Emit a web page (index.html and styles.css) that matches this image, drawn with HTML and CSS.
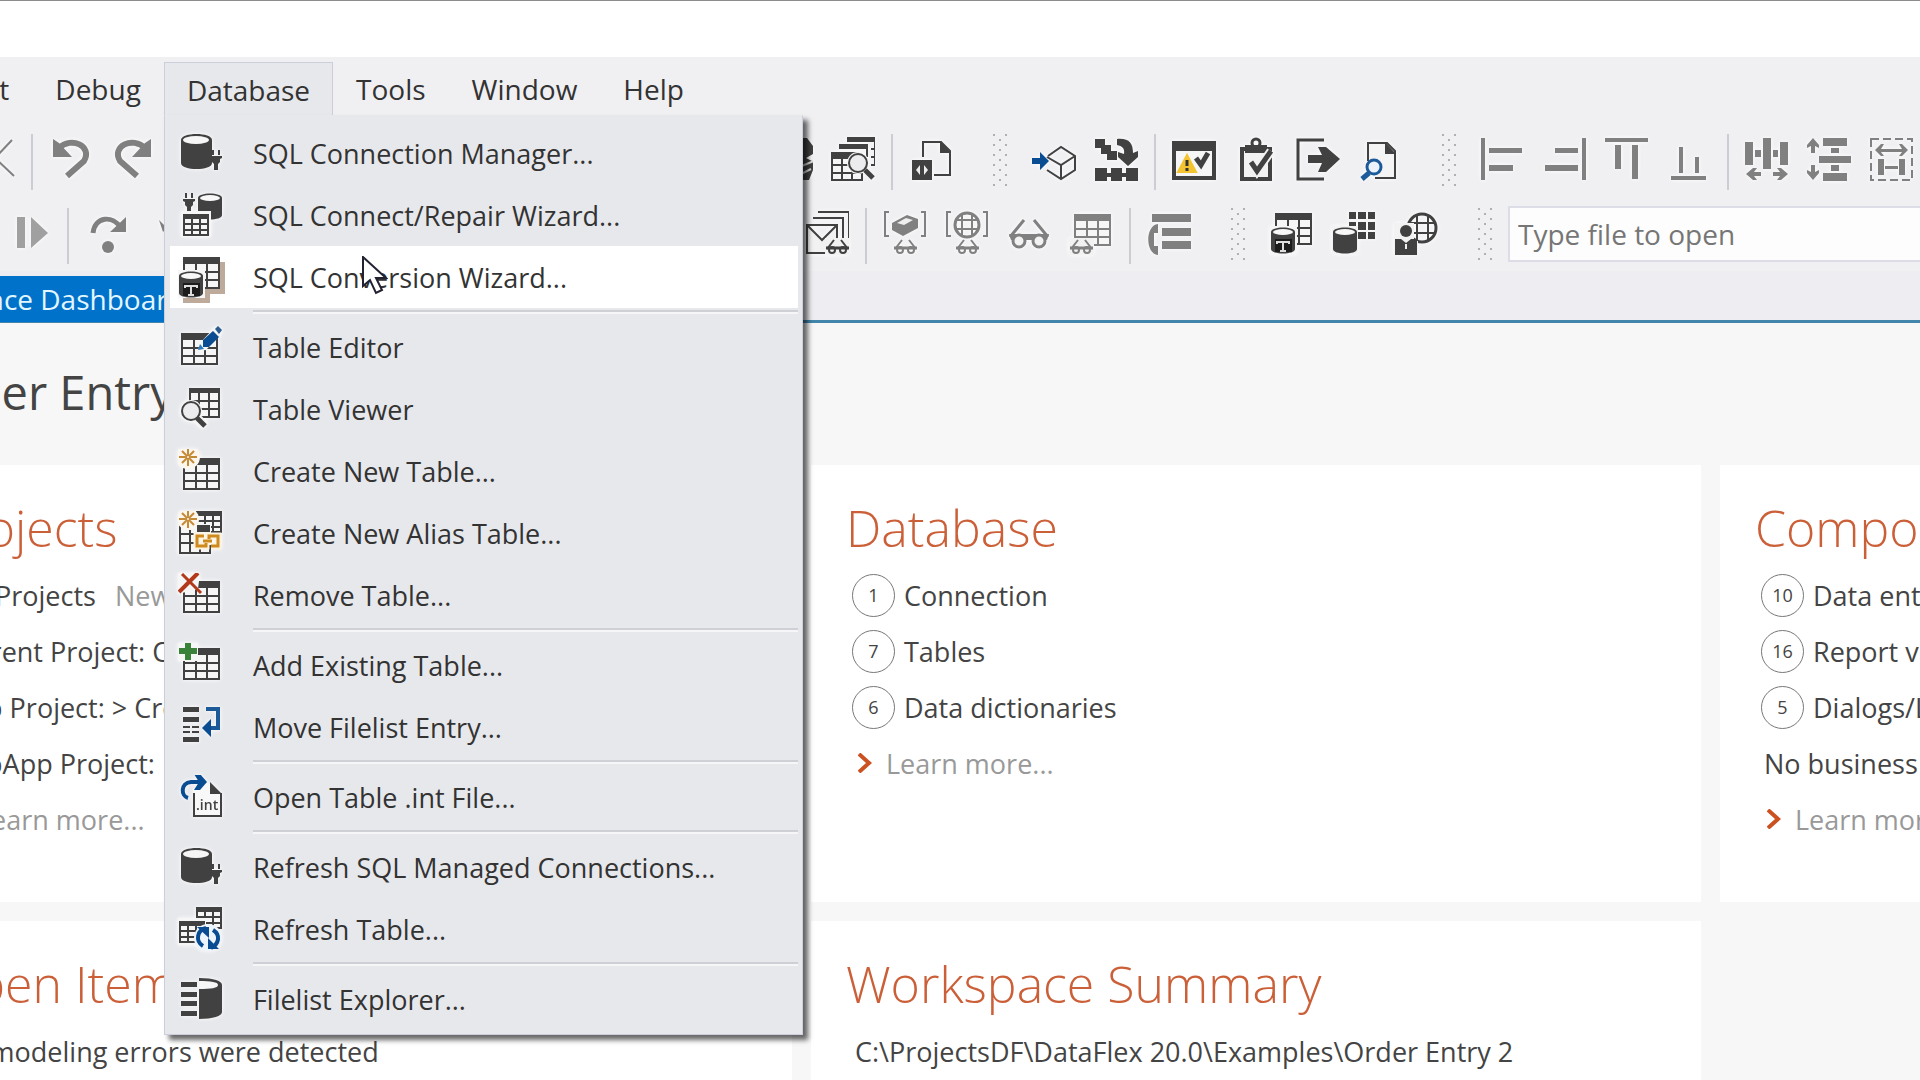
FILE: index.html
```html
<!DOCTYPE html>
<html lang="en">
<head>
    <meta charset="UTF-8">
    <meta name="viewport" content="width=device-width, initial-scale=1.0">
    <title>Order Entry 2 - Workspace Dashboard</title>
    <link rel="stylesheet" href="styles.css">
</head>
<body>

<!-- Icon set, all drawn on a 44x44 grid -->
<svg class="icon-defs" aria-hidden="true">
    <defs>
        <pattern id="grip-dots" width="12" height="10" patternUnits="userSpaceOnUse">
            <path d="M0 0h2v2H0zM6 5h2v2H6z" fill="#b0b0b4"/>
        </pattern>
        <g id="grid">
            <path d="M1 1h35v30H1z" fill="#f6f6f6" stroke="currentColor" stroke-width="2"/>
            <path d="M0 0h37v7H0z" fill="currentColor"/>
            <path d="M1 15h35M1 23h35M13 7v24M24 7v24" fill="none" stroke="currentColor" stroke-width="2"/>
        </g>
        <g id="small-grid">
            <path d="M1 1h24v20H1z" fill="#f6f6f6" stroke="currentColor" stroke-width="2"/>
            <path d="M0 0h26v5H0z" fill="currentColor"/>
            <path d="M1 10h24M1 16h24M9 5v16M17 5v16" fill="none" stroke="currentColor" stroke-width="2"/>
        </g>
        <g id="drum">
            <path d="M0 5C0-1 24-1 24 5v17c0 6-24 6-24 0z" fill="currentColor"/>
            <ellipse cx="12" cy="5" rx="10" ry="3" fill="#f8f8f8"/>
        </g>
        <g id="plug" fill="currentColor">
            <path d="M2 0h2v5H2zM8 0h2v5H8zM0 6h12v2l-2 1v3l-2 2v6H4v-6l-2-2V9L0 8z"/>
        </g>
        <g id="glasses" fill="none" stroke="currentColor">
            <path d="M1 10L8 1M22 10L15 1" stroke-width="2"/>
            <path d="M0 9h23" stroke-width="3"/>
            <circle cx="6" cy="11" r="3" stroke-width="2"/>
            <circle cx="17" cy="11" r="3" stroke-width="2"/>
        </g>
        <g id="spark" fill="none" stroke="#c58a35" stroke-width="2">
            <path d="M9 0v6M9 12v6M0 9h6M12 9h6M3 3l4 4M11 11l4 4M3 15l4-4M11 7l4-4"/>
            <circle cx="9" cy="9" r="2"/>
        </g>
    </defs>

    <symbol id="i-sql-manager" viewBox="0 0 44 44">
        <path d="M3 9C3 1 34 1 34 9v23c0 8-31 8-31 0z" fill="currentColor"/>
        <ellipse cx="18" cy="9" rx="13" ry="4" fill="#f6f6f6"/>
        <use href="#plug" x="32" y="19"/>
    </symbol>
    <symbol id="i-sql-repair" viewBox="0 0 44 44">
        <use href="#plug" x="5"/>
        <use href="#drum" x="20"/>
        <path d="M3 18h30v26H3z" fill="#f6f6f6"/>
        <use href="#small-grid" x="5" y="21"/>
    </symbol>
    <symbol id="i-sql-convert" viewBox="0 0 44 44">
        <use href="#grid" x="5" y="2"/>
        <path d="M0 15h27v28H0z" fill="#f6f6f6"/>
        <use href="#drum" x="1" y="16"/>
        <path d="M5 28h17v13H5z" fill="#1c1c1c"/>
        <path d="M7 33v-2h12v2M13 31v9M10 40h6" fill="none" stroke="#ddd" stroke-width="2"/>
    </symbol>
    <symbol id="i-table-edit" viewBox="0 0 44 44">
        <use href="#grid" x="3" y="8"/>
        <path d="M20 26l2-8L37 2l7 6-16 17z" fill="#f6f6f6"/>
        <path d="M25 15l10-9 6 6-10 10h-6z" fill="#0a4c92"/>
        <path d="M37 4l3-3 4 4-3 4z" fill="#2a5c90"/>
        <path d="M20 25l2-6 4 5z" fill="#2a7ac0"/>
    </symbol>
    <symbol id="i-table-view" viewBox="0 0 44 44">
        <path d="M12 2h29v28H12z" fill="#f6f6f6" stroke="currentColor" stroke-width="2"/>
        <path d="M11 1h31v5H11z" fill="currentColor"/>
        <path d="M12 14h29M12 22h29M21 6v24M31 6v24" fill="none" stroke="currentColor" stroke-width="2"/>
        <path d="M19 31l8 8" stroke="#f6f6f6" stroke-width="9"/>
        <circle cx="13" cy="24" r="11" fill="#f6f6f6"/>
        <circle cx="13" cy="24" r="9" fill="#ececef" stroke="currentColor" stroke-width="2"/>
        <path d="M19 31l8 8" stroke="currentColor" stroke-width="5"/>
    </symbol>
    <symbol id="i-table-new" viewBox="0 0 44 44">
        <use href="#grid" x="5" y="9"/>
        <circle cx="10" cy="8" r="12" fill="#fbf6ee"/>
        <use href="#spark" x="1" y="-1"/>
    </symbol>
    <symbol id="i-table-alias" viewBox="0 0 44 44">
        <use href="#small-grid" x="18" y="0"/>
        <path d="M-1 13h34v30H-1z" fill="#f6f6f6"/>
        <path d="M2 14v28h30v-8M2 23h14M2 32h14M12 19v23M22 34v8" fill="none" stroke="currentColor" stroke-width="2"/>
        <path d="M19 14h13v7H19z" fill="currentColor"/>
        <circle cx="10" cy="8" r="11" fill="#fbf6ee"/>
        <use href="#spark" x="1" y="-1"/>
        <path d="M26 25h-7v10h9v-3M33 35h7V25h-9v3M25 30h9" fill="none" stroke="#fdf3df" stroke-width="7"/>
        <path d="M26 25h-7v10h9v-3M33 35h7V25h-9v3M25 30h9" fill="none" stroke="#cf8a1e" stroke-width="3"/>
    </symbol>
    <symbol id="i-table-remove" viewBox="0 0 44 44">
        <use href="#grid" x="5" y="8"/>
        <path d="M0 0h22l-2 16-20 5z" fill="#f6f6f6"/>
        <path d="M1 19L20 0" stroke="#b3391b" stroke-width="4"/>
        <path d="M4 1l19 19" stroke="#b3391b" stroke-width="3"/>
    </symbol>
    <symbol id="i-table-add" viewBox="0 0 44 44">
        <use href="#grid" x="5" y="5"/>
        <path d="M0 0h20v18H0z" fill="#f6f6f6"/>
        <path d="M10 0v17M1 8h18" stroke="#3a8239" stroke-width="6"/>
    </symbol>
    <symbol id="i-move" viewBox="0 0 44 44">
        <path d="M5 2h16v5H5zM5 12h16v5H5zM5 21h7v2H5zM14 21h7v2h-7zM5 26h7v2H5zM14 26h7v2h-7zM5 32h16v5H5z" fill="currentColor"/>
        <path d="M28 4h12v19h-9" fill="none" stroke="#1c5a9a" stroke-width="4"/>
        <path d="M24 23l9-9v18z" fill="#0a4c92"/>
    </symbol>
    <symbol id="i-open-int" viewBox="0 0 44 44">
        <path d="M15 14v27h28V18L33 8" fill="#f8f8f8"/>
        <path d="M16 18v23h27V18" fill="none" stroke="currentColor" stroke-width="2"/>
        <path d="M32 7l12 12H32z" fill="currentColor"/>
        <path d="M10 23c-7-2-8-15 3-16h11" fill="none" stroke="#0a4c92" stroke-width="4"/>
        <path d="M16-1h6l7 8-7 8h-6l5-8z" fill="#0a4c92"/>
        <text x="18" y="35" font-size="14" font-weight="600" fill="currentColor">.int</text>
    </symbol>
    <symbol id="i-refresh" viewBox="0 0 44 44">
        <use href="#small-grid" x="18" y="0"/>
        <path d="M-1 11h29v27H-1z" fill="#f6f6f6"/>
        <use href="#small-grid" x="1" y="14"/>
        <circle cx="30" cy="31" r="14" fill="#edf4fb"/>
        <path d="M25 39c-8-5-6-16 3-18M35 23c8 5 6 14-2 18" fill="none" stroke="#0a4c92" stroke-width="4"/>
        <path d="M19 20h12v11zM41 42H30V31z" fill="#0a4c92"/>
    </symbol>
    <symbol id="i-filelist" viewBox="0 0 44 44">
        <path d="M3 5h16v5H3zM3 15h16v5H3zM3 24h16v5H3zM3 34h16v5H3z" fill="currentColor"/>
        <path d="M21 1c15 0 23 3 23 7v27c0 4-9 7-23 7z" fill="currentColor"/>
        <path d="M21 4c12 0 19 1 19 4s-7 4-19 4z" fill="#f6f6f6"/>
    </symbol>

    <symbol id="i-cut" viewBox="0 0 44 44">
        <path d="M41 3L24 21l19 18" fill="none" stroke="currentColor" stroke-width="2"/>
    </symbol>
    <symbol id="i-undo" viewBox="0 0 44 44">
        <path d="M10 11C22-1 44 9 35 24L18 39" fill="none" stroke="currentColor" stroke-width="6"/>
        <path d="M4 2l6 4 13 14H4z" fill="currentColor"/>
    </symbol>
    <symbol id="i-redo" viewBox="0 0 44 44">
        <path d="M34 11C22-1 0 9 9 24l17 15" fill="none" stroke="currentColor" stroke-width="6"/>
        <path d="M40 2l-6 4-13 14h19z" fill="currentColor"/>
    </symbol>
    <symbol id="i-step" viewBox="0 0 44 44">
        <path d="M10 6h8v31h-8zM24 6l17 16-17 15z" fill="currentColor"/>
    </symbol>
    <symbol id="i-step-over" viewBox="0 0 44 44">
        <path d="M8 22C10 5 28 4 36 17" fill="none" stroke="currentColor" stroke-width="5"/>
        <path d="M41 6v15H25z" fill="currentColor"/>
        <circle cx="23" cy="36" r="6" fill="currentColor"/>
    </symbol>
    <symbol id="i-step-in" viewBox="0 0 44 44">
        <path d="M12 9l8 8-4 4z" fill="currentColor"/>
    </symbol>
    <symbol id="i-find" viewBox="0 0 44 44">
        <path d="M26 1h12l6 8v8l-7 4 8 4-1 8-4 10H22z" fill="currentColor"/>
        <path d="M28 31l17-7M28 39l14-7" stroke="#ddd" stroke-width="2"/>
    </symbol>
    <symbol id="i-table-search" viewBox="0 0 44 44">
        <path d="M16 0h28v28h-4M40 12h4M40 20h4" fill="none" stroke="currentColor" stroke-width="2"/>
        <path d="M16 0h28v5H16zM8 7h29v5H8z" fill="currentColor"/>
        <path d="M36 8v12" stroke="currentColor" stroke-width="2"/>
        <path d="M0 15h28v7H0z" fill="currentColor"/>
        <path d="M1 16v27h30V30M1 28h20M1 36h30M11 22v21M21 33v10" fill="none" stroke="currentColor" stroke-width="2"/>
        <circle cx="27" cy="26" r="11" fill="#f6f6f6"/>
        <circle cx="27" cy="26" r="9" fill="#ececef" stroke="currentColor" stroke-width="2"/>
        <path d="M34 33l8 8" stroke="currentColor" stroke-width="5"/>
    </symbol>
    <symbol id="i-doc-code" viewBox="0 0 44 44">
        <path d="M14 20V5h18l9 9v24H25" fill="none" stroke="currentColor" stroke-width="2"/>
        <path d="M31 4l11 12H31zM3 23h20v20H3z" fill="currentColor"/>
        <path d="M11 28v10l-4-5zM15 28v10l4-5z" fill="#eee"/>
    </symbol>
    <symbol id="i-box-in" viewBox="0 0 44 44">
        <path d="M16 19l13-9 14 9v14l-14 9-14-9M15 20l14 8 14-9M29 28v13" fill="none" stroke="currentColor" stroke-width="2"/>
        <path d="M0 21h8v-6l9 9-9 9v-6H0z" fill="#0a4c92"/>
    </symbol>
    <symbol id="i-build" viewBox="0 0 44 44">
        <path d="M1 2h10v6h6v6h6v9H13v-6H7v-6H1zM1 31h12v5h4v-5h11v5h4v-5h12v14H32v-5h-4v5H17v-5h-4v5H1z" fill="currentColor"/>
        <path d="M23 2c12-1 16 4 16 14l5-2v6L34 29 24 20v-5l6 2c1-6-2-8-7-9z" fill="currentColor"/>
    </symbol>
    <symbol id="i-window-warn" viewBox="0 0 44 44">
        <path d="M2 8h40v33H2z" fill="#f6f6f6" stroke="currentColor" stroke-width="4"/>
        <path d="M0 4h44v10H0z" fill="currentColor"/>
        <path d="M15 18L6 35h18z" fill="#f4c430" stroke="#f4c430" stroke-width="2"/>
        <path d="M15 23v6M15 31v3" stroke="#333" stroke-width="3"/>
        <path d="M24 21l5 7 7-12" fill="none" stroke="currentColor" stroke-width="5"/>
    </symbol>
    <symbol id="i-clipboard" viewBox="0 0 44 44">
        <path d="M8 12h28v30H8z" fill="#f2f2f2" stroke="currentColor" stroke-width="4"/>
        <path d="M11 8h22v8H11z" fill="currentColor"/>
        <circle cx="22" cy="6" r="4" fill="none" stroke="currentColor" stroke-width="3"/>
        <path d="M17 25l6 9 14-20" fill="none" stroke="#f2f2f2" stroke-width="9"/>
        <path d="M17 25l6 9 14-20" fill="none" stroke="currentColor" stroke-width="5"/>
    </symbol>
    <symbol id="i-exit" viewBox="0 0 44 44">
        <path d="M28 3H2v39h26" fill="none" stroke="currentColor" stroke-width="3"/>
        <path d="M12 18h14l-4-8h8l14 12-14 13h-8l4-9H12z" fill="currentColor"/>
    </symbol>
    <symbol id="i-doc-search" viewBox="0 0 44 44">
        <path d="M10 24V6h19l8 8v27H17" fill="#f4f4f4" stroke="currentColor" stroke-width="2"/>
        <path d="M27 5l11 12H27z" fill="currentColor"/>
        <circle cx="16" cy="30" r="7" fill="#eaf3fb" stroke="#1c5a9a" stroke-width="3"/>
        <path d="M11 36l-7 6" stroke="#1c5a9a" stroke-width="5"/>
    </symbol>
    <symbol id="i-align-left" viewBox="0 0 44 44">
        <path d="M0 1h4v42H0zM8 11h33v5H8zM8 28h24v6H8z" fill="currentColor"/>
    </symbol>
    <symbol id="i-align-right" viewBox="0 0 44 44">
        <path d="M39 1h4v42h-4zM12 11h23v5H12zM2 28h33v6H2z" fill="currentColor"/>
    </symbol>
    <symbol id="i-align-top" viewBox="0 0 44 44">
        <path d="M0 1h43v4H0zM10 8h6v24h-6zM27 8h6v34h-6z" fill="currentColor"/>
    </symbol>
    <symbol id="i-align-bottom" viewBox="0 0 44 44">
        <path d="M4 39h35v4H4zM12 10h4v26h-4zM28 20h4v16h-4z" fill="currentColor"/>
    </symbol>
    <symbol id="i-space-h" viewBox="0 0 44 44">
        <path d="M0 5h8v23H0zM10 13h6v7h-6zM18 1h8v31h-8zM28 13h5v7h-5zM35 5h8v23h-8zM1 37l7-6h4l-3 4h7v4H9l3 4H8zM43 37l-7-6h-4l3 4h-7v4h7l-3 4h4z" fill="currentColor"/>
    </symbol>
    <symbol id="i-space-v" viewBox="0 0 44 44">
        <path d="M16 1h24v8H16zM24 11h8v5h-8zM12 19h32v7H12zM24 28h8v6h-8zM16 36h24v8H16zM6 1l6 7v3L8 9v7H4V9l-4 2V8zM6 43l6-7v-3l-4 2v-7H4v7l-4-2v3z" fill="currentColor"/>
    </symbol>
    <symbol id="i-size-to" viewBox="0 0 44 44">
        <path d="M2 2h41v41H2z" fill="none" stroke="currentColor" stroke-width="2" stroke-dasharray="8 4"/>
        <path d="M6 13l6-6h3l-3 5h21l-3-5h3l6 6-6 6h-3l3-4H12l3 4h-3zM9 22h6v16H9zM30 22h6v16h-6zM16 29h13v3H16z" fill="currentColor"/>
    </symbol>

    <symbol id="i-mail" viewBox="0 0 44 44">
        <path d="M13 1h31v28M8 7h30v20" fill="none" stroke="currentColor" stroke-width="2"/>
        <path d="M2 14h30v28H2zM2 14l15 15 15-15" fill="#f2f2f2" stroke="currentColor" stroke-width="2"/>
        <path d="M20 27h24v17H20z" fill="#f2f2f2"/>
        <use href="#glasses" x="21" y="28"/>
    </symbol>
    <symbol id="i-watch-local" viewBox="0 0 44 44">
        <path d="M6 1H2v24h4M38 1h4v24h-4" fill="none" stroke="currentColor" stroke-width="2"/>
        <path d="M9 12l15-8 11 4v9L20 25 9 19z" fill="currentColor"/>
        <path d="M14 12l9-5 7 2-9 5z" fill="#eee"/>
        <use href="#glasses" x="11" y="28"/>
    </symbol>
    <symbol id="i-watch-global" viewBox="0 0 44 44">
        <path d="M6 1H2v24h4M38 1h4v24h-4" fill="none" stroke="currentColor" stroke-width="2"/>
        <circle cx="22" cy="14" r="12" fill="none" stroke="currentColor" stroke-width="3"/>
        <path d="M11 9h22M11 18h22M17 3v22M27 3v22" stroke="currentColor" stroke-width="2"/>
        <use href="#glasses" x="11" y="28"/>
    </symbol>
    <symbol id="i-watch" viewBox="0 0 44 44">
        <path d="M3 26L17 9M41 26L27 9" stroke="currentColor" stroke-width="3"/>
        <path d="M2 23h40l-2 6H4z" fill="currentColor"/>
        <circle cx="12" cy="30" r="6" fill="#f2f2f2" stroke="currentColor" stroke-width="3"/>
        <circle cx="32" cy="30" r="6" fill="#f2f2f2" stroke="currentColor" stroke-width="3"/>
    </symbol>
    <symbol id="i-watch-table" viewBox="0 0 44 44">
        <use href="#grid" x="5" y="3"/>
        <path d="M0 27h25v17H0z" fill="#f2f2f2"/>
        <use href="#glasses" x="1" y="28"/>
    </symbol>
    <symbol id="i-call-stack" viewBox="0 0 44 44">
        <path d="M5 3h39v8H5zM15 17h29v8H15zM15 30h29v8H15zM11 13v9H7v13h4v9C-2 43-2 14 11 13z" fill="currentColor"/>
    </symbol>
    <symbol id="i-db-grid" viewBox="0 0 44 44">
        <path d="M17 1h7v7h-7zM26 1h8v7h-8zM36 1h7v7h-7zM17 11h7v8h-7zM26 11h8v8h-8zM36 11h7v8h-7zM26 21h8v7h-8zM36 21h7v7h-7z" fill="currentColor"/>
        <path d="M0 15h26v28H0z" fill="#f2f2f2"/>
        <use href="#drum" x="1" y="16"/>
    </symbol>
    <symbol id="i-user-web" viewBox="0 0 44 44">
        <circle cx="28" cy="17" r="14" fill="none" stroke="currentColor" stroke-width="3"/>
        <path d="M16 12h25M16 22h25M23 4v26M34 4v26" stroke="currentColor" stroke-width="2"/>
        <path d="M0 12h20v18h4v14H0z" fill="#f2f2f2"/>
        <circle cx="12" cy="20" r="6" fill="currentColor"/>
        <path d="M1 28h6l5 4 5-4h6v16H1z" fill="currentColor"/>
        <path d="M12 33v5" stroke="#eee" stroke-width="2"/>
    </symbol>
    <symbol id="i-chevron" viewBox="0 0 14 20">
        <path d="M1 1l10 9L1 19" fill="none" stroke="currentColor" stroke-width="4"/>
    </symbol>
    <symbol id="i-grip" viewBox="0 0 16 52">
        <rect width="14" height="52" fill="url(#grip-dots)"/>
    </symbol>
</svg>

<div class="window">
    <div class="title-bar"></div>

    <nav class="menu-bar">
        <button class="menu-title">Project</button>
        <button class="menu-title">Debug</button>
        <div class="menu-open">
            <button class="menu-title active" aria-expanded="true">Database</button>
            <div class="menu">
                <button class="menu-item"><svg class="icon"><use href="#i-sql-manager"/></svg>SQL Connection Manager...</button>
                <button class="menu-item"><svg class="icon"><use href="#i-sql-repair"/></svg>SQL Connect/Repair Wizard...</button>
                <button class="menu-item selected"><svg class="icon"><use href="#i-sql-convert"/></svg>SQL Conversion Wizard...</button>
                <hr>
                <button class="menu-item"><svg class="icon"><use href="#i-table-edit"/></svg>Table Editor</button>
                <button class="menu-item"><svg class="icon"><use href="#i-table-view"/></svg>Table Viewer</button>
                <button class="menu-item"><svg class="icon"><use href="#i-table-new"/></svg>Create New Table...</button>
                <button class="menu-item"><svg class="icon"><use href="#i-table-alias"/></svg>Create New Alias Table...</button>
                <button class="menu-item"><svg class="icon"><use href="#i-table-remove"/></svg>Remove Table...</button>
                <hr>
                <button class="menu-item"><svg class="icon"><use href="#i-table-add"/></svg>Add Existing Table...</button>
                <button class="menu-item"><svg class="icon"><use href="#i-move"/></svg>Move Filelist Entry...</button>
                <hr>
                <button class="menu-item"><svg class="icon"><use href="#i-open-int"/></svg>Open Table .int File...</button>
                <hr>
                <button class="menu-item"><svg class="icon"><use href="#i-sql-manager"/></svg>Refresh SQL Managed Connections...</button>
                <button class="menu-item"><svg class="icon"><use href="#i-refresh"/></svg>Refresh Table...</button>
                <hr>
                <button class="menu-item"><svg class="icon"><use href="#i-filelist"/></svg>Filelist Explorer...</button>
                <svg class="cursor" viewBox="0 0 26 40"><path d="M1 1v29l7-6 6 13 6-3-6-12h10z" fill="#fff" stroke="#223" stroke-width="2"/></svg>
            </div>
        </div>
        <button class="menu-title">Tools</button>
        <button class="menu-title">Window</button>
        <button class="menu-title">Help</button>
    </nav>

    <div class="toolbars">
        <div class="toolbar toolbar-edit">
            <button class="tool disabled" aria-label="Cut"><svg class="icon"><use href="#i-cut"/></svg></button>
            <span class="separator"></span>
            <button class="tool disabled" aria-label="Undo"><svg class="icon"><use href="#i-undo"/></svg></button>
            <button class="tool disabled" aria-label="Redo"><svg class="icon"><use href="#i-redo"/></svg></button>
            <span class="toolbar-space"></span>
            <button class="tool" aria-label="Find"><svg class="icon"><use href="#i-find"/></svg></button>
            <button class="tool" aria-label="Find in tables"><svg class="icon"><use href="#i-table-search"/></svg></button>
            <span class="separator"></span>
            <button class="tool" aria-label="Source"><svg class="icon"><use href="#i-doc-code"/></svg></button>
            <svg class="grip"><use href="#i-grip"/></svg>
            <button class="tool" aria-label="Add package"><svg class="icon"><use href="#i-box-in"/></svg></button>
            <button class="tool" aria-label="Build"><svg class="icon"><use href="#i-build"/></svg></button>
            <span class="separator"></span>
            <button class="tool" aria-label="Errors and warnings"><svg class="icon"><use href="#i-window-warn"/></svg></button>
            <button class="tool" aria-label="Tasks"><svg class="icon"><use href="#i-clipboard"/></svg></button>
            <button class="tool" aria-label="Output"><svg class="icon"><use href="#i-exit"/></svg></button>
            <button class="tool" aria-label="Find in file"><svg class="icon"><use href="#i-doc-search"/></svg></button>
            <svg class="grip"><use href="#i-grip"/></svg>
            <button class="tool disabled" aria-label="Align left"><svg class="icon"><use href="#i-align-left"/></svg></button>
            <button class="tool disabled" aria-label="Align right"><svg class="icon"><use href="#i-align-right"/></svg></button>
            <button class="tool disabled" aria-label="Align top"><svg class="icon"><use href="#i-align-top"/></svg></button>
            <button class="tool disabled" aria-label="Align bottom"><svg class="icon"><use href="#i-align-bottom"/></svg></button>
            <span class="separator"></span>
            <button class="tool disabled" aria-label="Space across"><svg class="icon"><use href="#i-space-h"/></svg></button>
            <button class="tool disabled" aria-label="Space down"><svg class="icon"><use href="#i-space-v"/></svg></button>
            <button class="tool disabled" aria-label="Size to content"><svg class="icon"><use href="#i-size-to"/></svg></button>
        </div>
        <div class="toolbar toolbar-debug">
            <button class="tool faded" aria-label="Continue"><svg class="icon"><use href="#i-step"/></svg></button>
            <span class="separator"></span>
            <button class="tool disabled" aria-label="Step over"><svg class="icon"><use href="#i-step-over"/></svg></button>
            <button class="tool disabled" aria-label="Step into"><svg class="icon"><use href="#i-step-in"/></svg></button>
            <span class="toolbar-space"></span>
            <button class="tool" aria-label="Message watch"><svg class="icon"><use href="#i-mail"/></svg></button>
            <span class="separator"></span>
            <button class="tool disabled" aria-label="Local watch"><svg class="icon"><use href="#i-watch-local"/></svg></button>
            <button class="tool disabled" aria-label="Global watch"><svg class="icon"><use href="#i-watch-global"/></svg></button>
            <button class="tool disabled" aria-label="Watch"><svg class="icon"><use href="#i-watch"/></svg></button>
            <button class="tool disabled" aria-label="Table watch"><svg class="icon"><use href="#i-watch-table"/></svg></button>
            <span class="separator"></span>
            <button class="tool disabled" aria-label="Call stack"><svg class="icon"><use href="#i-call-stack"/></svg></button>
            <svg class="grip"><use href="#i-grip"/></svg>
            <button class="tool" aria-label="Convert"><svg class="icon"><use href="#i-sql-convert"/></svg></button>
            <button class="tool" aria-label="Database builder"><svg class="icon"><use href="#i-db-grid"/></svg></button>
            <button class="tool" aria-label="Web users"><svg class="icon"><use href="#i-user-web"/></svg></button>
            <svg class="grip"><use href="#i-grip"/></svg>
            <input class="file-search" type="text" placeholder="Type file to open" aria-label="Type file to open">
        </div>
    </div>

    <div class="tab-strip">
        <button class="tab">Workspace Dashboard</button>
    </div>

    <main class="dashboard">
        <h1>Order Entry 2</h1>
        <div class="cards">
            <section class="card">
                <h2>Projects</h2>
                <div class="row"><span class="count">4</span>Projects <a class="action" href="#">New</a></div>
                <div class="row text-row">Current Project: Order</div>
                <div class="row text-row">Web Project: &gt; Create</div>
                <div class="row text-row">WebApp Project:</div>
                <a class="row learn" href="#"><svg class="chevron"><use href="#i-chevron"/></svg>Learn more...</a>
            </section>
            <section class="card">
                <h2>Database</h2>
                <div class="row"><span class="count">1</span>Connection</div>
                <div class="row"><span class="count">7</span>Tables</div>
                <div class="row"><span class="count">6</span>Data dictionaries</div>
                <a class="row learn" href="#"><svg class="chevron"><use href="#i-chevron"/></svg>Learn more...</a>
            </section>
            <section class="card">
                <h2>Components</h2>
                <div class="row"><span class="count">10</span>Data entry views</div>
                <div class="row"><span class="count">16</span>Report views</div>
                <div class="row"><span class="count">5</span>Dialogs/Lookups</div>
                <div class="row text-row">No business processes</div>
                <a class="row learn" href="#"><svg class="chevron"><use href="#i-chevron"/></svg>Learn more...</a>
            </section>
            <section class="card">
                <h2>Open Items</h2>
                <div class="row text-row">No modeling errors were detected</div>
            </section>
            <section class="card">
                <h2>Workspace Summary</h2>
                <div class="row text-row">C:\ProjectsDF\DataFlex 20.0\Examples\Order Entry 2</div>
            </section>
        </div>
    </main>
</div>

</body>
</html>
```

FILE: styles.css
```css
* {
    box-sizing: border-box;
    margin: 0;
    padding: 0;
}

html, body {
    height: 100%;
    overflow: hidden;
}

body {
    font-family: "Open Sans", "Noto Sans", sans-serif;
    font-size: 28px;
    color: #444;
    background-color: #f7f7f7;
}

button, input {
    font: inherit;
    color: inherit;
    border: none;
    background: none;
}

.icon-defs {
    position: absolute;
    width: 0;
    height: 0;
}

.window {
    display: flex;
    flex-direction: column;
    height: 100%;
}

.title-bar {
    flex: none;
    height: 57px;
    background-color: #fff;
    border-top: 1px solid #8c8c8c;
}

/* menu bar */

.menu-bar {
    display: flex;
    align-items: flex-end;
    flex: none;
    height: 60px;
    padding-bottom: 1px;
    margin-left: -105px;
    background-color: #f0f0f3;
    color: #333;
}

.menu-title {
    height: 54px;
    padding: 0 23px;
    white-space: nowrap;
}

.menu-open {
    position: relative;
}

.menu-title.active {
    padding: 0 22px;
    background-color: #e7e8ec;
    border: 1px solid #cccedb;
    border-bottom: none;
}

.menu {
    position: absolute;
    z-index: 1;
    top: 53px;
    left: 0;
    width: 639px;
    padding: 6px 4px 4px 5px;
    background-color: #e7e8ec;
    border: 1px solid #cccedb;
    border-top-color: #e7e8ec;
    box-shadow: 5px 5px 5px rgba(0, 0, 0, 0.6);
    font-size: 27px;
}

.menu-item {
    display: flex;
    align-items: center;
    gap: 31px;
    width: 100%;
    height: 62px;
    padding-left: 8px;
    text-align: left;
    white-space: nowrap;
}

.menu-item.selected {
    background-color: #fff;
}

.menu-item.selected .icon {
    filter: drop-shadow(5px 5px 0 #bdaa9b);
}

.menu hr {
    height: 4px;
    margin: 2px 0 2px 83px;
    border: none;
    border-top: 2px solid #cfd0d6;
    background-color: #f6f6f8;
}

.cursor {
    position: absolute;
    top: 140px;
    left: 197px;
    width: 26px;
    height: 40px;
}

.icon {
    flex: none;
    width: 44px;
    height: 44px;
    overflow: visible;
    color: #414141;
    filter: drop-shadow(0 0 2px #fff);
}

/* toolbars */

.toolbars {
    flex: none;
    padding-top: 6px;
    background-color: #f0f0f3;
    overflow: hidden;
}

.toolbar {
    display: flex;
    align-items: center;
    height: 74px;
}

.toolbar-edit {
    margin-left: -38px;
}

.toolbar-debug {
    margin-left: -2px;
}

.toolbar-space {
    flex: none;
    width: 596px;
}

.tool {
    display: flex;
    flex: none;
    padding: 0 9px 2px;
}

.tool.disabled .icon {
    color: #808080;
}

.tool.faded .icon {
    color: #a0a0a0;
}

.separator {
    flex: none;
    width: 2px;
    height: 56px;
    margin: 4px 7px 0;
    background-color: #cccdd2;
}

.grip {
    flex: none;
    width: 16px;
    height: 52px;
    margin: 0 14px 0 31px;
}

.file-search {
    flex: none;
    width: 600px;
    height: 56px;
    padding: 0 8px;
    background-color: #fdfdfd;
    border: 2px solid #dcdde6;
}

.file-search::placeholder {
    color: #767676;
    opacity: 1;
}

/* document tabs */

.tab-strip {
    flex: none;
    height: 52px;
    padding-top: 5px;
    background-color: #eeeef2;
    border-bottom: 3px solid #4287ab;
}

.tab {
    height: 46px;
    margin-left: -119px;
    padding: 0 8px;
    background-color: #0072ca;
    color: #e2f6ff;
    white-space: nowrap;
}

/* dashboard */

.dashboard {
    flex: 1;
    min-height: 0;
    margin-left: -98px;
    overflow: hidden;
    font-size: 27px;
}

h1 {
    height: 142px;
    padding: 41px 0 0 15px;
    font-size: 47px;
    line-height: 56px;
    font-weight: 400;
}

.cards {
    display: grid;
    grid-template-columns: repeat(3, 890px);
    grid-auto-rows: 437px;
    gap: 19px;
}

.card {
    background-color: #fff;
    white-space: nowrap;
}

h2 {
    height: 102px;
    padding: 26px 35px 0;
    font-size: 50px;
    line-height: 74px;
    font-weight: 300;
    color: #cb5f37;
}

.row {
    display: flex;
    align-items: center;
    gap: 9px;
    height: 56px;
    padding-left: 41px;
}

.text-row {
    padding-left: 44px;
}

.count {
    display: flex;
    align-items: center;
    justify-content: center;
    width: 43px;
    height: 43px;
    border: 1px solid #777;
    border-radius: 50%;
    font-size: 18px;
}

.action {
    margin-left: 10px;
    color: #999;
    text-decoration: none;
}

.learn {
    gap: 14px;
    padding-left: 47px;
    color: #999;
    text-decoration: none;
}

.chevron {
    width: 14px;
    height: 20px;
    color: #cb5220;
}
```
